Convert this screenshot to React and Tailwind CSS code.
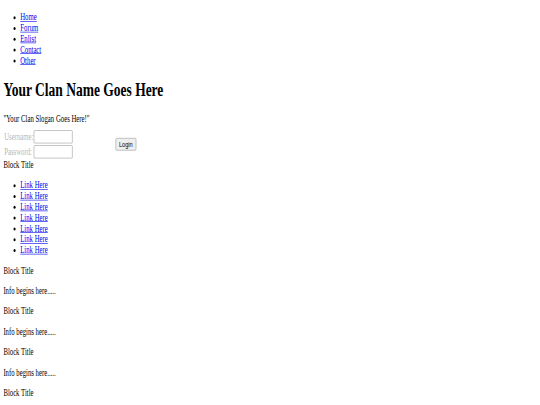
export default function App() {
  const nav = ["Home", "Forum", "Enlist", "Contact", "Other"];
  const links = Array.from({ length: 7 }, () => "Link Here");
  return (
    <div className="w-[540px] h-[405px] overflow-hidden bg-white">
      <div className="w-[1280px] origin-top-left [transform:scale(0.421875,0.6)] px-2 font-['Liberation_Serif','Times_New_Roman',serif] text-[16px] leading-[normal] text-black">
        <ul className="list-disc pl-10 mt-3 mb-4">
          {nav.map((n) => (
            <li key={n}>
              <a href="#" className="text-[#0000ee] underline">{n}</a>
            </li>
          ))}
        </ul>
        <h1 className="text-[32px] font-bold my-[21.44px]">Your Clan Name Goes Here</h1>
        <p className="mt-4 mb-0">"Your Clan Slogan Goes Here!"</p>
        <div className="flex items-center mt-[9px]">
          <div className="flex flex-col gap-[3px]">
            <div className="flex items-center">
              <span className="w-[72px] pl-[2px] text-[#b8b8b8]">Username:</span>
              <input className="w-[92px] h-[22px] border border-[#8f8f8f] rounded-[2px] bg-white" />
            </div>
            <div className="flex items-center">
              <span className="w-[72px] pl-[2px] text-[#b8b8b8]">Password:</span>
              <input type="password" className="w-[92px] h-[22px] border border-[#8f8f8f] rounded-[2px] bg-white" />
            </div>
          </div>
          <button className="ml-[102px] h-[21px] px-[7px] bg-[#efefef] border border-[#8f8f8f] rounded-[3px] font-['Liberation_Sans',Arial,sans-serif] text-[13.33px] leading-[normal]">
            Login
          </button>
        </div>
        <div className="mt-[2px]">Block Title</div>
        <ul className="list-disc pl-10 my-4">
          {links.map((l, i) => (
            <li key={i}>
              <a href="#" className="text-[#0000ee] underline">{l}</a>
            </li>
          ))}
        </ul>
        {[0, 1, 2, 3].map((i) => (
          <div key={i}>
            <div>Block Title</div>
            <p className="my-4">Info begins here.....</p>
          </div>
        ))}
      </div>
    </div>
  );
}
